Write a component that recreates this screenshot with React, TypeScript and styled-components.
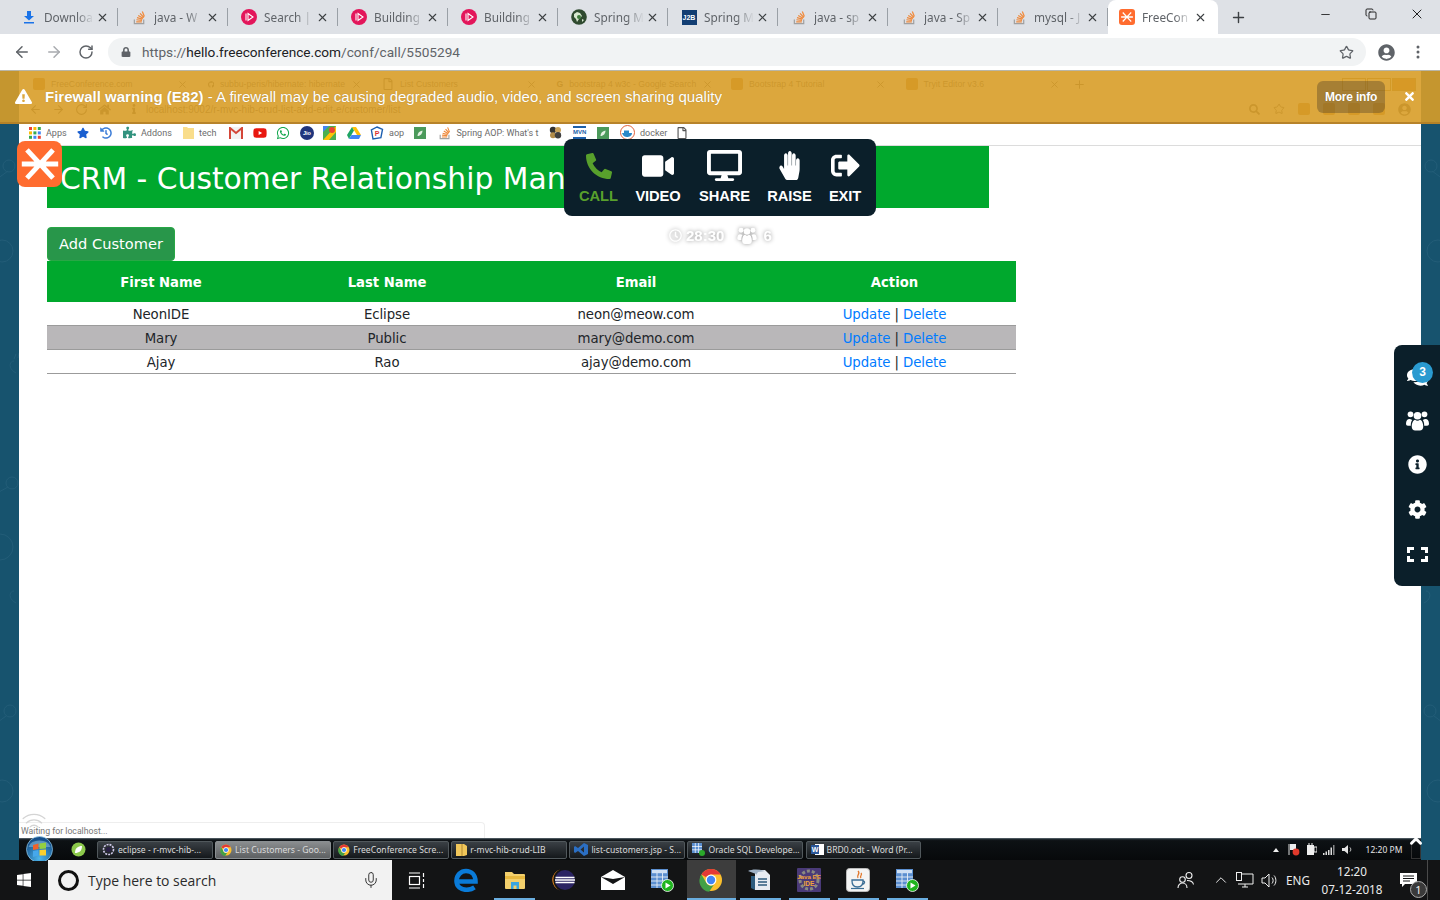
import React from "react";
import styled, { createGlobalStyle } from "styled-components";
import { ArrowLeft, ArrowRight, RotateCw, Plus, Minus, X, Copy, Star, Mic, Wifi, ChevronUp } from "lucide-react";
import { FaLock, FaUserCircle, FaExclamationTriangle, FaTimes, FaPhoneAlt, FaVideo, FaDesktop, FaHandPaper, FaSignOutAlt, FaComments, FaInfoCircle, FaCog, FaRegClock, FaWindows, FaStar, FaPuzzlePiece, FaHistory, FaYoutube, FaWhatsapp, FaRegFile, FaGithub, FaHome, FaInfo, FaSearch } from "react-icons/fa";

const GlobalStyle = createGlobalStyle`
  html, body { margin: 0; padding: 0; width: 1440px; height: 900px; overflow: hidden; background: #fff; }
  * { box-sizing: border-box; }
`;

const Page = styled.div`
  width: 1440px; height: 900px; display: flex; flex-direction: column;
  font-family: "Liberation Sans", Arial, sans-serif; overflow: hidden;
`;
const TabStrip = styled.div`
  height: 34px; background: #dee1e6; display: flex; align-items: stretch; padding-left: 8px; flex: none;
`;
const Tab = styled.div<{ $active?: boolean }>`
  width: 110px; display: flex; align-items: center; padding-left: ${p => (p.$active ? "11px" : "13px")}; position: relative;
  background: ${p => (p.$active ? "#fff" : "transparent")};
  border-radius: ${p => (p.$active ? "8px 8px 0 0" : "0")};
  &::after {
    content: ""; position: absolute; right: 0; top: 8px; bottom: 8px; width: 1px;
    background: ${p => (p.$active ? "transparent" : "#9aa0a6")};
  }
`;
const TabIconBox = styled.span`
  width: 16px; height: 16px; display: flex; align-items: center; justify-content: center; flex: none;
`;
const TabTitle = styled.span`
  width: 50px; margin-left: 7px; font: 11.8px "Noto Sans", "Liberation Sans", sans-serif; color: #5f6368; white-space: nowrap; overflow: hidden;
  -webkit-mask-image: linear-gradient(to right, #000 65%, transparent 100%);
  mask-image: linear-gradient(to right, #000 65%, transparent 100%);
`;
const TabClose = styled.span`
  margin-left: 2px; display: flex; color: #3c4043; flex: none;
`;
const NewTab = styled.span`
  margin-left: 12px; display: flex; align-items: center; color: #3c4043;
`;
const WindowControls = styled.div`
  margin-left: auto; display: flex; align-items: flex-start; color: #111;
`;
const WindowButton = styled.span`
  width: 46px; height: 28px; display: flex; align-items: center; justify-content: center;
`;
const J2B = styled.span`
  width: 15px; height: 15px; background: #123e73; color: #fff; font: bold 7px "Liberation Sans", sans-serif;
  display: flex; align-items: center; justify-content: center;
`;
const FcoBadge = styled.span`
  width: 16px; height: 16px; border-radius: 3px; background: #ff6c2f; display: flex; align-items: center; justify-content: center;
`;
const Toolbar = styled.div`
  height: 36px; background: #fff; display: flex; align-items: center; flex: none; color: #5f6368;
`;
const NavButton = styled.span<{ $w: number; $dim?: boolean }>`
  width: ${p => p.$w}px; display: flex; justify-content: center; color: ${p => (p.$dim ? "#a8abaf" : "#5f6368")};
`;
const Omnibox = styled.div`
  width: 1258px; height: 28px; border-radius: 14px; background: #f1f3f4; display: flex; align-items: center; padding: 0 12px 0 13px;
`;
const Url = styled.span`
  margin-left: 11px; font: 13.65px Roboto, "Liberation Sans", sans-serif; color: #5f6368;
  b { font-weight: 400; color: #202124; }
`;
const OmniStar = styled.span`
  margin-left: auto; display: flex; color: #5f6368;
`;
const Stage = styled.div`
  position: relative; height: 790px; display: flex; flex: none; background: #17536e; border-top: 1px solid #b9b6a8;
`;
const Strip = styled.div`
  width: 19px; height: 100%; flex: none; overflow: hidden; color: #235d78;
`;
const Screen = styled.div`
  flex: 1; display: flex; flex-direction: column; background: #fff; min-width: 0;
`;
const GhostChrome = styled.div`
  height: 53px; flex: none; color: #555;
`;
const GhostTabs = styled.div`
  height: 26px; display: flex; padding: 0 5px 0 7px; align-items: center; font-size: 8.7px;
`;
const GhostTab = styled.div`
  width: 174.5px; flex: none; display: flex; align-items: center; gap: 6px; padding: 0 13px 0 7px; white-space: nowrap;
  svg:last-child { margin-left: auto; flex: none; }
`;
const GhostSquare = styled.i`
  width: 12px; height: 12px; background: #c47d1e; flex: none; border-radius: 2px;
`;
const GhostPlus = styled.span`
  display: flex;
`;
const GhostWindow = styled.div`
  margin-left: auto; display: flex; gap: 1px;
`;
const GhostWinBox = styled.i<{ $red?: boolean }>`
  width: 24px; height: 13px; display: block; border: 1px solid #a77a20; background: ${p => (p.$red ? "#c97418" : "transparent")};
`;
const GhostBar = styled.div`
  height: 27px; display: flex; align-items: center; padding: 0 0 3px 10px; gap: 10px; font-size: 10px;
`;
const GhostInfo = styled.span`
  margin-left: 8px; display: flex;
`;
const GhostUrl = styled.span`
  margin-left: -3px; white-space: nowrap;
`;
const GhostRight = styled.div`
  margin-left: auto; display: flex; gap: 13px; padding-right: 10px; align-items: center;
`;
const Bookmarks = styled.div`
  height: 22px; flex: none; display: flex; align-items: center; padding: 0 0 4px 5px; border-bottom: 1px solid #dcdcdc;
`;
const Bookmark = styled.div<{ $w: number }>`
  width: ${p => p.$w}px; flex: none; display: flex; align-items: center; gap: 5px; padding-left: 5px;
  font: 9px Roboto, "Liberation Sans", sans-serif; color: #6b6b6b; white-space: nowrap; overflow: hidden;
`;
const Content = styled.main`
  flex: 1; padding-left: 28px; font-family: "DejaVu Sans", Verdana, sans-serif; min-height: 0;
`;
const Heading = styled.h1`
  margin: 0; width: 942px; height: 62px; background: #00a82d; color: #fff; font-weight: 400; font-size: 29.75px; line-height: 65px; padding-left: 13px; white-space: nowrap; overflow: hidden;
`;
const AddButton = styled.button`
  margin-top: 19px; display: block; width: 128px; height: 34px; padding: 0 0 2px; border: 1px solid #28a745; border-radius: 4px;
  background: #28964a; color: #fff; font: 14.6px "DejaVu Sans", Verdana, sans-serif;
`;
const Table = styled.table`
  width: 969px; border-collapse: separate; border-spacing: 0; table-layout: fixed; font-size: 13.3px; letter-spacing: -0.08px; text-align: center; color: #212529;
`;
const Th = styled.th`
  height: 41px; background: #00a82d; color: #fff; font-size: 13.2px; font-weight: 700; letter-spacing: 0; padding: 2px 0 0;
`;
const Tr = styled.tr<{ $alt?: boolean }>`
  background: ${p => (p.$alt ? "#b9b7b9" : "#fff")};
`;
const Td = styled.td`
  height: 24px; padding: 1px 0 0; border-bottom: 1px solid #9b9b9b;
`;
const Link = styled.a`
  color: #007bff; text-decoration: none;
`;
const StatusBar = styled.div`
  width: 466px; height: 16px; flex: none; border-top: 1px solid #eee; border-right: 1px solid #eee; border-radius: 0 4px 0 0;
  padding-left: 2px; font: 8.7px/16px Roboto, "Liberation Sans", sans-serif; color: #777;
`;
const WifiMark = styled.span`
  position: absolute; left: 21px; top: 738px; color: #d4d4d4; display: flex;
`;
const Win7Bar = styled.div`
  height: 22px; flex: none; position: relative; display: flex; align-items: center; padding-left: 52px;
  background: linear-gradient(#222c33 0, #0d1114 8%, #07090b 100%); border-top: 1px solid #4a555c;
`;
const Orb = styled.div`
  position: absolute; left: 7px; top: -3px; width: 27px; height: 25px; overflow: hidden; display: flex; justify-content: center;
`;
const Win7Buttons = styled.div`
  display: flex; gap: 2.6px; margin-left: 11px;
`;
const Win7Button = styled.div<{ $active?: boolean }>`
  width: 115.5px; height: 18px; display: flex; align-items: center; gap: 3px; padding-left: 4px; white-space: nowrap; overflow: hidden;
  border: 1px solid ${p => (p.$active ? "#8a8f92" : "#51585c")}; border-radius: 2px;
  background: ${p => (p.$active ? "linear-gradient(#8a8d8f, #5d6062)" : "linear-gradient(#3a4045, #14181b)")};
  color: #dcdcdc; font: 8.6px "Noto Sans", "Liberation Sans", sans-serif;
`;
const Win7Tray = styled.div`
  margin-left: auto; display: flex; align-items: center; padding-right: 9px; height: 100%;
`;
const TrayCell = styled.span<{ $w: number }>`
  width: ${p => p.$w}px; display: flex; justify-content: center; align-items: center; font: 8.5px "Noto Sans", "Liberation Sans", sans-serif; color: #e5e5e5;
`;
const PeekBox = styled.span`
  position: absolute; right: 0; top: 2px; width: 10px; height: 18px; border: 1px solid #333;
`;
const PeekChevron = styled.span`
  position: absolute; right: -4px; top: -7px; color: #fff; display: flex;
`;
const Win10Bar = styled.div`
  height: 40px; flex: none; display: flex; background: #131415; color: #fff;
`;
const StartCell = styled.div`
  width: 48px; display: flex; align-items: center; justify-content: center;
`;
const SearchBox = styled.div`
  width: 344px; background: #f2f2f2; display: flex; align-items: center; padding-left: 10px; color: #2b2b2b; font: 13.95px "Open Sans", "Noto Sans", sans-serif;
`;
const SearchRing = styled.span`
  width: 21px; height: 21px; border-radius: 50%; border: 3px solid #111; flex: none; margin-right: 9px;
`;
const SearchMic = styled.span`
  margin-left: auto; margin-right: 12px; display: flex; color: #333;
`;
const AppCell = styled.div<{ $running?: boolean; $active?: boolean }>`
  width: 49.1px; display: flex; align-items: center; justify-content: center; position: relative;
  background: ${p => (p.$active ? "#3d3d3d" : "transparent")};
  &::after {
    content: ""; display: ${p => (p.$running ? "block" : "none")}; position: absolute; bottom: 0; height: 2px; background: #6aaee0;
    left: ${p => (p.$active ? "0" : "4px")}; right: ${p => (p.$active ? "0" : "4px")};
  }
`;
const SystemTray = styled.div`
  margin-left: auto; display: flex; align-items: center; width: 269px; height: 100%;
`;
const SysCell = styled.div<{ $w: number; $ml?: number }>`
  width: ${p => p.$w}px; margin-left: ${p => p.$ml || 0}px; display: flex; justify-content: center; align-items: center; position: relative; flex: none;
  font: 11.7px "Noto Sans", "Open Sans", sans-serif; color: #ececec;
`;
const Clock = styled.div`
  text-align: center; line-height: 18px; white-space: nowrap;
`;
const NotifyBadge = styled.span`
  position: absolute; left: 21px; top: 8px; width: 17px; height: 17px; border-radius: 50%; background: #3a3a3a; border: 1px solid #aaa;
  font: 11px/15px "Noto Sans", sans-serif; text-align: center; color: #eee;
`;
const DesktopEdge = styled.div`
  width: 1px; height: 100%; background: #4a4a4a;
`;
const Banner = styled.div`
  position: absolute; left: 0; right: 0; top: 0; height: 53px; background: rgba(216, 157, 40, 0.9); border-bottom: 2px solid rgba(178, 128, 40, 0.9);
  display: flex; align-items: center; padding: 0 7px 0 15px; color: #fff; text-shadow: 0 0 1px rgba(0, 0, 0, 0.25);
`;
const BannerText = styled.p`
  margin: 0 0 0 13px; font-size: 15.03px; white-space: nowrap;
`;
const BannerMore = styled.span`
  margin-left: auto; width: 68px; height: 32px; border-radius: 6px; background: rgba(90, 72, 40, 0.42); font-size: 12px; font-weight: 700; display: flex; align-items: center; justify-content: center; letter-spacing: -0.2px;
`;
const BannerClose = styled.span`
  width: 48px; display: flex; justify-content: center;
`;
const Logo = styled.div`
  position: absolute; left: 17px; top: 70px; width: 45px; height: 46px; border-radius: 8px; background: #ff6c2f; display: flex; align-items: center; justify-content: center;
`;
const CallPanel = styled.div`
  position: absolute; left: 564px; top: 68px; width: 312px; height: 77px; background: #0b1f2a; border-radius: 8px;
  display: flex; padding: 11px 0 0 15px; color: #fff;
`;
const CallItem = styled.div<{ $w: number; $green?: boolean }>`
  width: ${p => p.$w}px; flex: none; display: flex; flex-direction: column; align-items: center; color: ${p => (p.$green ? "#58a02c" : "#fff")};
`;
const CallIcon = styled.div`
  height: 31px; display: flex; align-items: center; justify-content: center;
`;
const CallLabel = styled.span`
  margin-top: 6px; font-size: 14.7px; font-weight: 700; letter-spacing: -0.1px; line-height: 18px;
`;
const HandIcon = styled(FaHandPaper)`
  transform: scaleX(0.8);
`;
const Timer = styled.div`
  position: absolute; left: 669px; top: 154px; display: flex; align-items: center; height: 20px; color: #fff; font-size: 15px; font-weight: 700;
  filter: drop-shadow(0 0 2px rgba(0, 0, 0, 0.4));
`;
const TimerText = styled.span<{ $ml: number }>`
  margin-left: ${p => p.$ml}px;
`;
const TimerIconGap = styled.span`
  margin-left: 13px; display: flex;
`;
const SidePanel = styled.aside`
  position: absolute; right: 0; top: 274px; width: 46px; height: 241px; background: #0b1f2a; border-radius: 8px 0 0 8px; color: #fff;
  display: flex; flex-direction: column; padding-top: 8px;
`;
const SideItem = styled.div<{ $pt?: number }>`
  height: 44.7px; display: flex; align-items: center; justify-content: center; position: relative; padding-top: ${p => p.$pt || 0}px;
`;
const SideBadge = styled.span`
  position: absolute; left: 18px; top: 9px; width: 21px; height: 21px; border-radius: 50%; background: #2a9ad0; font-size: 12px; font-weight: 700; line-height: 21px; text-align: center;
`;

const Aster = ({ s, w }: { s: number; w: number }) => (
  <svg width={s} height={s} viewBox="0 0 24 24" stroke="#fff" strokeWidth={w} strokeLinecap="square">
    <path d="M3 12h18M5.500 5l13 14M18.500 5l-13 14" />
  </svg>
);
const UsersIcon = ({ w, h }: { w: number; h: number }) => (
  <svg width={w} height={h} viewBox="0 0 24 21" fill="currentColor">
    <circle cx="4.700" cy="4" r="3" /><circle cx="19.300" cy="4" r="3" />
    <circle cx="12" cy="5.500" r="4" />
    <path d="M0 14c0-3 1.500-5 3.500-5 1 0 2 .4 3 1-1 1.200-1.500 3-1.500 6H2c-1.200 0-2-.8-2-2zM24 14c0-3-1.500-5-3.500-5-1 0-2 .4-3 1 1 1.200 1.500 3 1.500 6h3c1.200 0 2-.8 2-2zM6 17c0-4 1.500-7 3.500-7.300.7.700 1.500 1 2.500 1s1.800-.3 2.500-1C16.500 10 18 13 18 17c0 2.500-1.500 4-3.500 4h-5C7.500 21 6 19.500 6 17z" />
  </svg>
);
const ExpandIcon = () => (
  <svg width="21" height="15" viewBox="0 0 21 15" fill="none" stroke="#fff" strokeWidth="3">
    <path d="M1.500 6V1.500H7M14 1.500h5.500V6M19.500 9v4.500H14M7 13.500H1.500V9" />
  </svg>
);
const DownloadIcon = () => (
  <svg width="14" height="14" viewBox="0 0 14 14" fill="#1a73e8"><path d="M5 1h4v5h3L7 10.500 2 6h3zM2 12h10v1.400H2z" /></svg>
);
const StackIcon = ({ s = 15 }: { s?: number }) => (
  <svg width={s} height={s} viewBox="0 0 16 16" fill="none" strokeWidth="1.300">
    <path d="M2.500 10v4.500h10V10" stroke="#a0a0a0" />
    <path d="M4.500 12.600h6M4.700 10.400l6 .6M5.300 8.200l5.800 1.600M6.600 5.800l5.200 3M8.600 3.600l4 4.400M11 1.600l2.200 5.400" stroke="#ef8a3c" />
  </svg>
);
const PinkPlay = () => (
  <svg width="16" height="16" viewBox="0 0 16 16"><circle cx="8" cy="8" r="8" fill="#e3165b" /><path d="M5 4.500v7M7 4.500l5 3.500-5 3.500z" fill="none" stroke="#fff" strokeWidth="1.100" /></svg>
);
const SpringGlobe = () => (
  <svg width="16" height="16" viewBox="0 0 16 16"><circle cx="8" cy="8" r="7.800" fill="#2f4a2f" /><path d="M3 5l3-2 3 1 2 3-3 3-2 3-1-3-2-2zM11 10l2 1-2 2z" fill="#d8e8d0" /><circle cx="8" cy="8" r="2" fill="#3d7a3a" /></svg>
);
const AppsGrid = () => (
  <svg width="12" height="12" viewBox="0 0 12 12">
    {[0, 1, 2].flatMap(r => [0, 1, 2].map(c => <rect key={`${r}${c}`} x={c * 4.400} y={r * 4.400} width="3" height="3" fill={["#ea4335", "#fbbc05", "#34a853", "#4285f4"][(r + c) % 4]} />))}
  </svg>
);
const FolderPale = () => (
  <svg width="11" height="13" viewBox="0 0 11 13"><path d="M0 1h4l1 1h6v11H0z" fill="#f9dd8b" /></svg>
);
const LeafSquare = () => (
  <svg width="12" height="12" viewBox="0 0 12 12"><rect width="12" height="12" fill="#4b9a5b" /><path d="M3.500 9c0-3 2-5 5-5.500 0 3-2 5.500-5 5.500z" fill="#e4f2e4" /></svg>
);
const GmailIcon = () => (
  <svg width="14" height="12" viewBox="0 0 14 12"><rect width="14" height="12" fill="#f2f2f2" /><path d="M1 12V1l6 5 6-5v11" fill="none" stroke="#d44638" strokeWidth="2" /></svg>
);
const JioIcon = () => (
  <svg width="14" height="14" viewBox="0 0 14 14"><circle cx="7" cy="7" r="7" fill="#20357c" /><text x="7" y="9.200" textAnchor="middle" fontSize="5.600" fontWeight="700" fill="#fff" fontFamily="Liberation Sans">Jio</text></svg>
);
const MapsIcon = () => (
  <svg width="13" height="14" viewBox="0 0 13 14"><rect width="13" height="14" fill="#4caf50" /><path d="M0 14L13 0v6L6 14z" fill="#ffc107" /><path d="M0 0h6L0 6z" fill="#4285f4" /><circle cx="9" cy="4" r="3" fill="#ea4335" /></svg>
);
const DriveIcon = () => (
  <svg width="14" height="12" viewBox="0 0 14 12"><path d="M5 0h4l5 8h-4z" fill="#ffc107" /><path d="M5 0l2 3.500L2 12 0 8z" fill="#1fa463" /><path d="M4.500 8H14l-2 4H2z" fill="#4285f4" /></svg>
);
const PIcon = () => (
  <svg width="14" height="14" viewBox="0 0 14 14"><path d="M7 1l5.500 2.400-1.600 8.200L3 13 1.400 4z" fill="#fff" stroke="#1d5fb0" strokeWidth="1.400" /><text x="7" y="9.600" textAnchor="middle" fontSize="7" fontWeight="700" fill="#d33" fontFamily="Liberation Sans">P</text></svg>
);
const CamoIcon = () => (
  <svg width="13" height="13" viewBox="0 0 13 13"><circle cx="4" cy="4" r="3.200" fill="#333" /><circle cx="9" cy="4" r="3" fill="#c9a25a" /><circle cx="4" cy="9.200" r="3" fill="#b08b4a" /><circle cx="9" cy="9.200" r="3.200" fill="#3f3f3f" /></svg>
);
const MvnBox = styled.span`
  width: 13px; height: 13px; display: block; background: #fff; border-top: 2px solid #1e5fa8; border-bottom: 2px solid #1e5fa8; font: bold 6px/9px "Liberation Sans", sans-serif; color: #1e5fa8; text-align: center;
`;
const DockerIcon = () => (
  <svg width="15" height="15" viewBox="0 0 15 15"><circle cx="7.500" cy="7.500" r="7" fill="#fff" stroke="#e0603a" strokeWidth="1" /><path d="M2 8h10c0 3-3 4-5 4S3 11 2 8z" fill="#2a88c8" /><path d="M4 5.500h5V8H4z" fill="#2a88c8" /></svg>
);
const ChromeIcon = ({ s }: { s: number }) => (
  <svg width={s} height={s} viewBox="0 0 24 24">
    <circle cx="12" cy="12" r="11" fill="#fbc02d" />
    <path d="M12 1a11 11 0 0 1 9.530 5.500H12a5.500 5.500 0 0 0-4.760 2.750L2.470 6.500A11 11 0 0 1 12 1z" fill="#e53935" />
    <path d="M2.470 6.500l4.770 8.250A5.500 5.500 0 0 0 14.700 17l-4.600 6.850A11 11 0 0 1 2.470 6.500z" fill="#43a047" />
    <circle cx="12" cy="12" r="5.400" fill="#fff" /><circle cx="12" cy="12" r="4.200" fill="#4285f4" />
  </svg>
);
const EdgeIcon = () => (
  <svg width="24" height="24" viewBox="0 0 24 24" fill="none" stroke="#0a7bd8" strokeWidth="4.600">
    <path d="M3 13.500h18.500C21.500 7 17.500 3 12 3 7 3 2.500 7 2.500 13c0 5.500 4.500 8.800 10 8.800 3 0 5.500-.8 8-2.500" />
  </svg>
);
const EclipseSmall = () => (
  <svg width="13" height="13" viewBox="0 0 13 13"><circle cx="6.500" cy="6.500" r="5" fill="none" stroke="#cfc8e8" strokeWidth="1.600" strokeDasharray="2 1" /><circle cx="6.500" cy="6.500" r="2.600" fill="#2a2045" /></svg>
);
const SpringLeaf = () => (
  <svg width="15" height="15" viewBox="0 0 15 15"><circle cx="7.500" cy="7.500" r="7" fill="#8cc84b" /><path d="M4 11c0-5 3-7 7-7 0 5-3 7-7 7z" fill="#fff" /></svg>
);
const FolderSmall = () => (
  <svg width="11" height="13" viewBox="0 0 11 13"><path d="M0 1h8l3 2v9l-3 1H0z" fill="#f0c65a" /><path d="M6 1v12" stroke="#b08830" /></svg>
);
const VsIcon = () => (
  <svg width="14" height="13" viewBox="0 0 14 13"><path d="M10 0l4 2v9l-4 2-6-5-3 2-1-1V4l1-1 3 2zM10 3.500L6.500 6.500l3.500 3z" fill="#2b6fc4" /></svg>
);
const TableSmall = () => (
  <svg width="13" height="13" viewBox="0 0 13 13"><rect width="10" height="10" fill="#5b8fd0" /><path d="M0 3.500h10M0 6.800h10M3.300 0v10M6.600 0v10" stroke="#fff" strokeWidth=".7" /><circle cx="10" cy="10" r="3" fill="#2aa82a" /></svg>
);
const WordSmall = () => (
  <svg width="13" height="13" viewBox="0 0 13 13"><rect x="4" y="1" width="9" height="11" fill="#fff" /><rect y="2" width="8" height="9" fill="#2b579a" /><text x="4" y="9" textAnchor="middle" fontSize="7" fontWeight="700" fill="#fff" fontFamily="Liberation Sans">W</text></svg>
);
const OrbIcon = () => (
  <svg width="27" height="27" viewBox="0 0 27 27" style={{ flex: "none" }}>
    <defs>
      <radialGradient id="orbFill" cx="50%" cy="85%" r="75%"><stop offset="0" stopColor="#4db6ec" /><stop offset="1" stopColor="#154f8a" /></radialGradient>
    </defs>
    <circle cx="13.500" cy="13.500" r="13" fill="url(#orbFill)" stroke="#9ad0ee" strokeWidth=".7" />
    <path d="M2.500 11a11.500 9 0 0 1 22 0z" fill="#a6d4f0" opacity=".45" />
    <path d="M7 9l5.500-1.500V13L7 14z" fill="#f0622a" /><path d="M13.500 7.500L20 6.500V12.600L13.500 13z" fill="#94d040" />
    <path d="M7 15l5.500-1v5.500L7 21z" fill="#46a8ec" /><path d="M13.500 14l6.500-.4V19.500L13.500 19.500z" fill="#fcd02e" />
  </svg>
);
const TaskView = () => (
  <svg width="17" height="17" viewBox="0 0 17 17" fill="none" stroke="#fff" strokeWidth="1.200"><path d="M1 1h11M1 16h11" /><rect x="1.500" y="4.500" width="10" height="8" /><path d="M15.500 1v4M15.500 7v3M15.500 12v4" /></svg>
);
const ExplorerIcon = () => (
  <svg width="22" height="20" viewBox="0 0 22 20"><path d="M1 2h7l2 2h10a1 1 0 0 1 1 1v13a1 1 0 0 1-1 1H2a1 1 0 0 1-1-1z" fill="#f3d06c" /><path d="M1 6h20v3H1z" fill="#e8b93f" /><path d="M7 12h8v7h-2.500v-3.500h-3V19H7z" fill="#3aa6e0" /></svg>
);
const EclipseBig = () => (
  <svg width="24" height="24" viewBox="0 0 24 24"><path d="M8 1.500A11 11 0 0 0 8 22.500 11.600 11.600 0 0 1 8 1.500z" fill="#f28c1c" /><circle cx="13" cy="12" r="10" fill="#2b2463" /><path d="M3.500 9.500h19M3 12h20M3.500 14.500h19" stroke="#fff" strokeWidth="1.300" /></svg>
);
const MailIcon = () => (
  <svg width="24" height="20" viewBox="0 0 24 20"><path d="M0 7L12 0l12 7v13H0z" fill="#fff" /><path d="M0 7l12 7 12-7-12 2z" fill="#131415" /></svg>
);
const SqlIcon = () => (
  <svg width="24" height="24" viewBox="0 0 24 24"><rect x="1" y="1" width="17" height="19" fill="#5b8fd0" /><rect x="2" y="2" width="15" height="3.200" fill="#cfe0f4" /><path d="M1 9h17M1 13h17M1 17h17M7 5v15M12.500 5v15" stroke="#e8eef6" strokeWidth=".9" /><circle cx="17.500" cy="17.500" r="6" fill="#1fb51f" stroke="#fff" strokeWidth=".8" /><path d="M15.500 14.500v6l5-3z" fill="#fff" /></svg>
);
const LibreIcon = () => (
  <svg width="24" height="24" viewBox="0 0 24 24"><path d="M7 2h10l5 5v15H7z" fill="#e6ebf2" /><path d="M8 6L0 3c4-2 11-2 17 0l-7 1-2 3z" fill="#9fb2c6" /><path d="M7 8H3v12l4 2z" fill="#2c5b7e" /><path d="M10 11h9M10 14h9M10 17h9" stroke="#2c5b7e" strokeWidth="1.300" /></svg>
);
const JeeIcon = () => (
  <svg width="24" height="24" viewBox="0 0 24 24"><rect width="24" height="24" rx="1" fill="#4a3a78" /><circle cx="12" cy="12" r="9" fill="none" stroke="#8a8a80" strokeWidth="3" strokeDasharray="3 2" /><text x="12" y="10.500" textAnchor="middle" fontSize="6.200" fontWeight="700" fill="#f2a33a" fontFamily="Liberation Sans">Java EE</text><text x="12" y="17.500" textAnchor="middle" fontSize="6.600" fontWeight="700" fill="#f2a33a" fontFamily="Liberation Sans">IDE</text></svg>
);
const JavaIcon = () => (
  <svg width="24" height="24" viewBox="0 0 24 24"><rect x=".5" y=".5" width="23" height="23" rx="3" fill="#f4f4f4" stroke="#bbb" /><path d="M12 3c3 3-2 4 0 7M15 5c2 2-2 3 0 5" fill="none" stroke="#e2762a" strokeWidth="1.300" /><path d="M6 12h11v1c0 4-2 6-5.500 6S6 17 6 13zM17 13c2 0 2.500 3-1 3.500" fill="none" stroke="#3b6e96" strokeWidth="1.300" /><path d="M5 20.500h13" stroke="#3b6e96" strokeWidth="1.200" /></svg>
);
const PeopleIcon = () => (
  <svg width="18" height="18" viewBox="0 0 18 18" fill="none" stroke="#f0f0f0" strokeWidth="1.100"><circle cx="12" cy="4.500" r="3" /><circle cx="5.500" cy="8.500" r="2.800" /><path d="M1 17c0-3 2-5 4.500-5s4.500 2 4.500 5M10 9.500c3 0 6 1 6.500 4" /></svg>
);
const NetworkIcon = () => (
  <svg width="18" height="16" viewBox="0 0 18 16" fill="none" stroke="#f0f0f0" strokeWidth="1"><path d="M5 2h12v10H2" /><rect x=".5" y=".5" width="5" height="8" fill="#131415" /><path d="M9 12v3M6 15h6" /></svg>
);
const SoundIcon = () => (
  <svg width="17" height="15" viewBox="0 0 17 15" fill="none" stroke="#f0f0f0" strokeWidth="1"><path d="M1 5v5h3l4 4V1L4 5zM11 4.500c1.500 1.500 1.500 4.500 0 6M13 2.500c2.500 2.500 2.500 7.500 0 10" /></svg>
);
const NotifyIcon = () => (
  <svg width="17" height="15" viewBox="0 0 17 15"><path d="M0 0h17v11H5l-3 3v-3H0z" fill="#fff" /><path d="M3 3h11M3 5.500h11M3 8h7" stroke="#131415" /></svg>
);
const FlagX = () => (
  <svg width="12" height="13" viewBox="0 0 12 13"><path d="M1 1v11" stroke="#ddd" /><path d="M2 1h6v6H2z" fill="#eee" /><circle cx="8" cy="9" r="3.400" fill="#e0392b" /></svg>
);
const Battery = () => (
  <svg width="11" height="13" viewBox="0 0 11 13"><path d="M1 2h7v10H1z" fill="#eee" /><path d="M3 0v2M6 0v2M8 4h3v5H8z" stroke="#eee" fill="none" /></svg>
);
const Signal = () => (
  <svg width="12" height="10" viewBox="0 0 12 10" fill="#ddd"><rect y="8" width="1.500" height="2" /><rect x="2.500" y="6.500" width="1.500" height="3.500" /><rect x="5" y="5" width="1.500" height="5" /><rect x="7.500" y="2.500" width="1.500" height="7.500" /><rect x="10" y="0" width="1.500" height="10" opacity=".6" /></svg>
);
const Speaker = () => (
  <svg width="11" height="11" viewBox="0 0 11 11" fill="#e5e5e5"><path d="M0 4v3h2.500L6 10V1L2.500 4z" /><path d="M8 3.500c1 1 1 3 0 4" stroke="#ddd" fill="none" /></svg>
);
const UpTri = () => (
  <svg width="6" height="4" viewBox="0 0 6 4" fill="#eee"><path d="M3 0l3 4H0z" /></svg>
);

const tabs: { title: string; icon: React.ReactNode; active?: boolean }[] = [
  { title: "Downloa", icon: <DownloadIcon /> },
  { title: "java - W", icon: <StackIcon /> },
  { title: "Search |", icon: <PinkPlay /> },
  { title: "Building", icon: <PinkPlay /> },
  { title: "Building", icon: <PinkPlay /> },
  { title: "Spring M", icon: <SpringGlobe /> },
  { title: "Spring M", icon: <J2B>J2B</J2B> },
  { title: "java - sp", icon: <StackIcon /> },
  { title: "java - Sp", icon: <StackIcon /> },
  { title: "mysql - J", icon: <StackIcon /> },
  { title: "FreeCon", icon: <FcoBadge><Aster s={14} w={2.200} /></FcoBadge>, active: true },
];

const ghostTabs: [string, React.ReactNode][] = [
  ["FreeConference.com", <GhostSquare />],
  ["subbu-peris/hibernate: hibernate", <FaGithub size={13} />],
  ["List Customers", <FaRegFile size={12} />],
  ["bootstrap 4 w3c - Google Search", <b>G</b>],
  ["Bootstrap 4 Tutorial", <GhostSquare />],
  ["Tryit Editor v3.6", <GhostSquare />],
];

const rows: [string, string, string][] = [
  ["NeonIDE", "Eclipse", "neon@meow.com"],
  ["Mary", "Public", "mary@demo.com"],
  ["Ajay", "Rao", "ajay@demo.com"],
];

const win7: { t: string; i: React.ReactNode; a?: boolean }[] = [
  { t: "eclipse - r-mvc-hib-...", i: <EclipseSmall /> },
  { t: "List Customers - Goo...", i: <ChromeIcon s={12} />, a: true },
  { t: "FreeConference Scre...", i: <ChromeIcon s={12} /> },
  { t: "r-mvc-hib-crud-LIB", i: <FolderSmall /> },
  { t: "list-customers.jsp - S...", i: <VsIcon /> },
  { t: "Oracle SQL Develope...", i: <TableSmall /> },
  { t: "BRD0.odt - Word (Pr...", i: <WordSmall /> },
];

const Wallpaper = ({ flip }: { flip?: boolean }) => (
  <svg width="19" height="790" viewBox="0 0 19 790" fill="none" stroke="currentColor" strokeWidth="1" style={flip ? { transform: "scaleX(-1)" } : undefined}>
    <circle cx="9" cy="95" r="6" /><path d="M8 100L-3 108" />
    <circle cx="2" cy="180" r="11" /><path d="M14 290c-5 0-6 8 2 12M14 288l2-5M18 287l1-5" />
    <circle cx="12" cy="412" r="6" /><path d="M8 416l-9 5" /><circle cx="0" cy="476" r="13" />
    <path d="M14 520c-5 0-6 8 2 12" /><circle cx="10" cy="640" r="6" /><path d="M6 645l-8 6" /><circle cx="2" cy="720" r="11" />
  </svg>
);

export default function App() {
  return (
    <Page>
      <GlobalStyle />
      <TabStrip>
        {tabs.map((t, i) => (
          <Tab key={i} $active={t.active}>
            <TabIconBox>{t.icon}</TabIconBox>
            <TabTitle>{t.title}</TabTitle>
            <TabClose><X size={13} strokeWidth={2} /></TabClose>
          </Tab>
        ))}
        <NewTab><Plus size={17} strokeWidth={2} /></NewTab>
        <WindowControls>
          <WindowButton><Minus size={13} strokeWidth={1.500} /></WindowButton>
          <WindowButton><Copy size={12} strokeWidth={1.800} /></WindowButton>
          <WindowButton><X size={16} strokeWidth={1.400} /></WindowButton>
        </WindowControls>
      </TabStrip>

      <Toolbar>
        <NavButton $w={44}><ArrowLeft size={18} strokeWidth={2} /></NavButton>
        <NavButton $w={20} $dim><ArrowRight size={18} strokeWidth={2} /></NavButton>
        <NavButton $w={44}><RotateCw size={16} strokeWidth={2.200} /></NavButton>
        <Omnibox>
          <FaLock size={10} />
          <Url>https://<b>hello.freeconference.com</b>/conf/call/5505294</Url>
          <OmniStar><Star size={15} strokeWidth={2} /></OmniStar>
        </Omnibox>
        <NavButton $w={40}><FaUserCircle size={17} /></NavButton>
        <NavButton $w={24}>
          <svg width="4" height="14" viewBox="0 0 4 14" fill="#5f6368"><circle cx="2" cy="2" r="1.500" /><circle cx="2" cy="7" r="1.500" /><circle cx="2" cy="12" r="1.500" /></svg>
        </NavButton>
      </Toolbar>

      <Stage>
        <Strip><Wallpaper /></Strip>
        <Screen>
          <GhostChrome>
            <GhostTabs>
              {ghostTabs.map(([t, icon]) => (
                <GhostTab key={t}>{icon}<span>{t}</span><X size={11} /></GhostTab>
              ))}
              <GhostPlus><Plus size={13} /></GhostPlus>
              <GhostWindow><GhostWinBox /><GhostWinBox /><GhostWinBox $red /></GhostWindow>
            </GhostTabs>
            <GhostBar>
              <ArrowLeft size={13} /><ArrowRight size={13} /><RotateCw size={13} /><FaHome size={13} />
              <GhostInfo><FaInfo size={10} /></GhostInfo>
              <GhostUrl>localhost:9002/r-mvc-hib-crud-list-add-edit-e/customer/list</GhostUrl>
              <GhostRight>
                <FaSearch size={11} /><Star size={12} /><GhostSquare /><GhostSquare /><GhostSquare /><GhostSquare /><FaUserCircle size={13} />
              </GhostRight>
            </GhostBar>
          </GhostChrome>
          <Bookmarks>
            <Bookmark $w={48}><AppsGrid />Apps</Bookmark>
            <Bookmark $w={23}><FaStar size={12} color="#1a5fd0" /></Bookmark>
            <Bookmark $w={23}><FaHistory size={12} color="#3f7fd8" /></Bookmark>
            <Bookmark $w={60}><FaPuzzlePiece size={13} color="#33937f" />Addons</Bookmark>
            <Bookmark $w={46}><FolderPale />tech</Bookmark>
            <Bookmark $w={23.500}><GmailIcon /></Bookmark>
            <Bookmark $w={23.500}><FaYoutube size={14} color="#e8170f" /></Bookmark>
            <Bookmark $w={23.500}><FaWhatsapp size={14} color="#13a74d" /></Bookmark>
            <Bookmark $w={23.500}><JioIcon /></Bookmark>
            <Bookmark $w={23.500}><MapsIcon /></Bookmark>
            <Bookmark $w={23.500}><DriveIcon /></Bookmark>
            <Bookmark $w={44}><PIcon />aop</Bookmark>
            <Bookmark $w={23.500}><LeafSquare /></Bookmark>
            <Bookmark $w={111.500}><StackIcon s={14} />Spring AOP: What's t</Bookmark>
            <Bookmark $w={24}><CamoIcon /></Bookmark>
            <Bookmark $w={23.500}><MvnBox>MVN</MvnBox></Bookmark>
            <Bookmark $w={23.500}><LeafSquare /></Bookmark>
            <Bookmark $w={56}><DockerIcon />docker</Bookmark>
            <Bookmark $w={23}><FaRegFile size={12} color="#555" /></Bookmark>
          </Bookmarks>
          <Content>
            <Heading>CRM - Customer Relationship Manager</Heading>
            <AddButton>Add Customer</AddButton>
            <Table>
              <colgroup>
                <col width="228" /><col width="224" /><col width="274" /><col width="243" />
              </colgroup>
              <thead>
                <tr><Th>First Name</Th><Th>Last Name</Th><Th>Email</Th><Th>Action</Th></tr>
              </thead>
              <tbody>
                {rows.map((r, i) => (
                  <Tr key={r[0]} $alt={i === 1}>
                    <Td>{r[0]}</Td><Td>{r[1]}</Td><Td>{r[2]}</Td>
                    <Td><Link>Update</Link> | <Link>Delete</Link></Td>
                  </Tr>
                ))}
              </tbody>
            </Table>
          </Content>
          <StatusBar>Waiting for localhost...</StatusBar>
          <Win7Bar>
            <Orb><OrbIcon /></Orb>
            <SpringLeaf />
            <Win7Buttons>
              {win7.map(b => (
                <Win7Button key={b.t} $active={b.a}>{b.i}<span>{b.t}</span></Win7Button>
              ))}
            </Win7Buttons>
            <Win7Tray>
              <TrayCell $w={17.500}><UpTri /></TrayCell>
              <TrayCell $w={17.500}><FlagX /></TrayCell>
              <TrayCell $w={17.500}><Battery /></TrayCell>
              <TrayCell $w={18}><Signal /></TrayCell>
              <TrayCell $w={18}><Speaker /></TrayCell>
              <TrayCell $w={56}>12:20 PM</TrayCell>
            </Win7Tray>
            <PeekBox />
            <PeekChevron><ChevronUp size={18} strokeWidth={4} /></PeekChevron>
          </Win7Bar>
        </Screen>
        <Strip><Wallpaper flip /></Strip>

        <WifiMark><Wifi size={26} strokeWidth={1.200} /></WifiMark>
        <Banner>
          <FaExclamationTriangle size={17} />
          <BannerText><b>Firewall warning (E82)</b> - A firewall may be causing degraded audio, video, and screen sharing quality</BannerText>
          <BannerMore>More info</BannerMore>
          <BannerClose><FaTimes size={13} /></BannerClose>
        </Banner>
        <Logo><Aster s={42} w={2.800} /></Logo>
        <CallPanel>
          <CallItem $w={39} $green><CallIcon><FaPhoneAlt size={26} /></CallIcon><CallLabel>CALL</CallLabel></CallItem>
          <CallItem $w={17} />
          <CallItem $w={46}><CallIcon><FaVideo size={32} /></CallIcon><CallLabel>VIDEO</CallLabel></CallItem>
          <CallItem $w={18} />
          <CallItem $w={51}><CallIcon><FaDesktop size={35} /></CallIcon><CallLabel>SHARE</CallLabel></CallItem>
          <CallItem $w={17} />
          <CallItem $w={45}><CallIcon><HandIcon size={29} /></CallIcon><CallLabel>RAISE</CallLabel></CallItem>
          <CallItem $w={16} />
          <CallItem $w={34}><CallIcon><FaSignOutAlt size={29} /></CallIcon><CallLabel>EXIT</CallLabel></CallItem>
        </CallPanel>
        <Timer>
          <FaRegClock size={13} />
          <TimerText $ml={4}>28:30</TimerText>
          <TimerIconGap><UsersIcon w={20} h={17} /></TimerIconGap>
          <TimerText $ml={6}>6</TimerText>
        </Timer>
        <SidePanel>
          <SideItem $pt={5}><FaComments size={21} /><SideBadge>3</SideBadge></SideItem>
          <SideItem><UsersIcon w={23} h={21} /></SideItem>
          <SideItem><FaInfoCircle size={19} /></SideItem>
          <SideItem><FaCog size={19} /></SideItem>
          <SideItem><ExpandIcon /></SideItem>
        </SidePanel>
      </Stage>

      <Win10Bar>
        <StartCell><FaWindows size={16} /></StartCell>
        <SearchBox>
          <SearchRing />
          Type here to search
          <SearchMic><Mic size={18} strokeWidth={1.300} /></SearchMic>
        </SearchBox>
        <AppCell><TaskView /></AppCell>
        <AppCell><EdgeIcon /></AppCell>
        <AppCell $running><ExplorerIcon /></AppCell>
        <AppCell><EclipseBig /></AppCell>
        <AppCell><MailIcon /></AppCell>
        <AppCell><SqlIcon /></AppCell>
        <AppCell $running $active><ChromeIcon s={24} /></AppCell>
        <AppCell $running><LibreIcon /></AppCell>
        <AppCell $running><JeeIcon /></AppCell>
        <AppCell $running><JavaIcon /></AppCell>
        <AppCell $running><SqlIcon /></AppCell>
        <SystemTray>
          <SysCell $w={30}><PeopleIcon /></SysCell>
          <SysCell $w={24} $ml={8}><ChevronUp size={18} strokeWidth={1.300} /></SysCell>
          <SysCell $w={24}><NetworkIcon /></SysCell>
          <SysCell $w={24}><SoundIcon /></SysCell>
          <SysCell $w={34}>ENG</SysCell>
          <SysCell $w={74}><Clock>12:20<br />07-12-2018</Clock></SysCell>
          <SysCell $w={38}><NotifyIcon /><NotifyBadge>1</NotifyBadge></SysCell>
          <DesktopEdge />
        </SystemTray>
      </Win10Bar>
    </Page>
  );
}
